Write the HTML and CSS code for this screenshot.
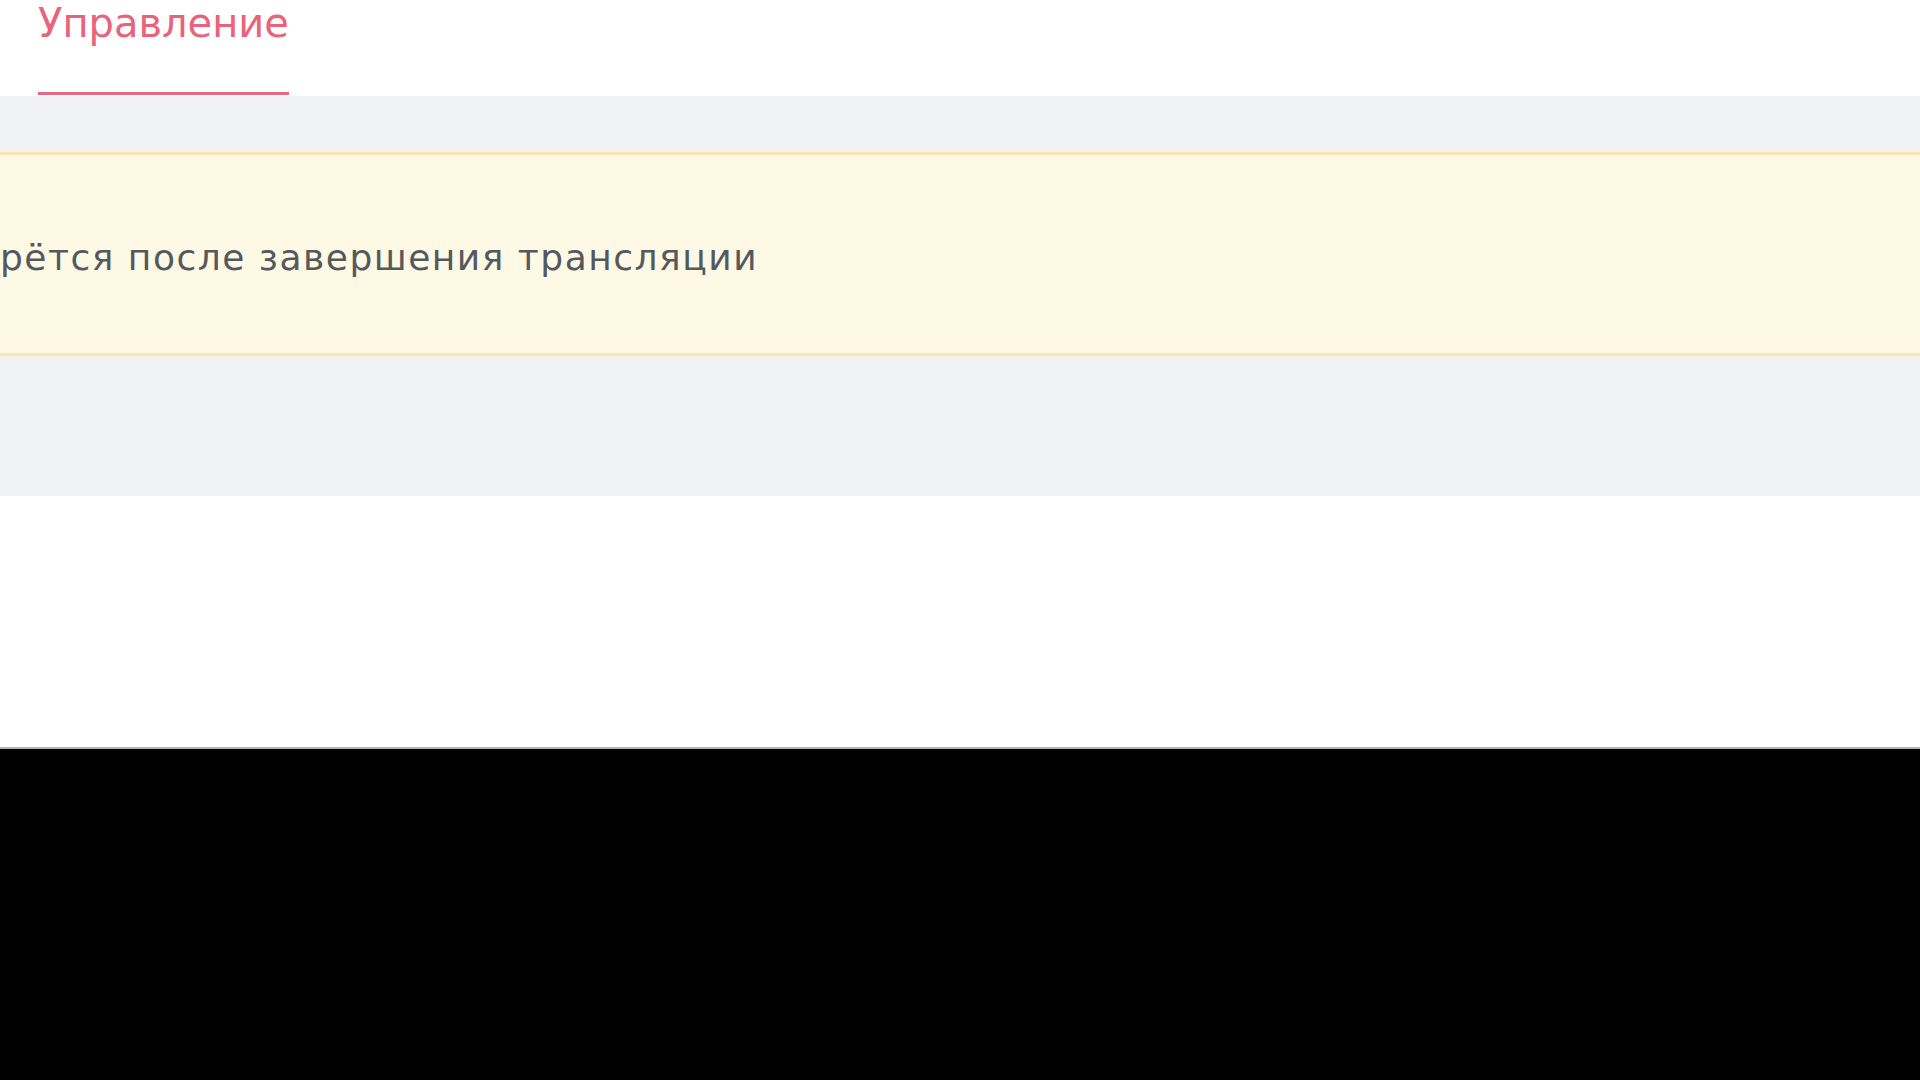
FILE: index.html
```html
<!DOCTYPE html>
<html lang="ru">
  <head>
    <meta charset="UTF-8" />
    <meta name="viewport" content="width=device-width, initial-scale=1.0" />
    <title>Трансляция | Управление</title>
    <link rel="stylesheet" href="styles.css">
  </head>
  <body>
    <div class="header">
      <div class="tabs">
        <a class="tab active">Управление</a>
      </div>
    </div>
    <div class="section">
      <div class="notice">
        <span class="noticeText">рётся после завершения трансляции</span>
      </div>
    </div>
    <div class="blank"></div>
    <div class="bottom"></div>
  </body>
</html>
```

FILE: styles.css
```css
html,
body {
  margin: 0;
  padding: 0;
  height: 100%;
  overflow: hidden;
  font-family: "DejaVu Sans", Verdana, sans-serif;
}

body {
  display: flex;
  flex-direction: column;
  background: #000000;
}

.header {
  background-color: #ffffff;
  height: 96px;
  display: flex;
}

.tabs {
  display: flex;
  padding-left: 38px;
}

.tab {
  display: flex;
  flex-direction: column;
  justify-content: space-between;
  color: #e9637b;
  font-size: 40px;
  line-height: 46px;
  text-decoration: none;
  cursor: pointer;
}
.tab.active::after {
  content: "";
  display: block;
  height: 3px;
  margin-bottom: 1px;
  background-color: #e96a80;
}

.section {
  background-color: #f1f2f4;
  height: 400px;
  padding-top: 56px;
  box-sizing: border-box;
}

.notice {
  background-color: #fdf9e5;
  border-top: 3px solid #f8e6ae;
  border-bottom: 3px solid #f8e6ae;
  height: 198px;
  display: flex;
  align-items: center;
}

.noticeText {
  color: #55595e;
  font-size: 36px;
  letter-spacing: 1.5px;
  padding-top: 6px;
}

.blank {
  background-color: #ffffff;
  height: 251px;
}

.bottom {
  flex: 1;
  background-color: #000000;
  border-top: 2px solid #b4b4b4;
}
```
